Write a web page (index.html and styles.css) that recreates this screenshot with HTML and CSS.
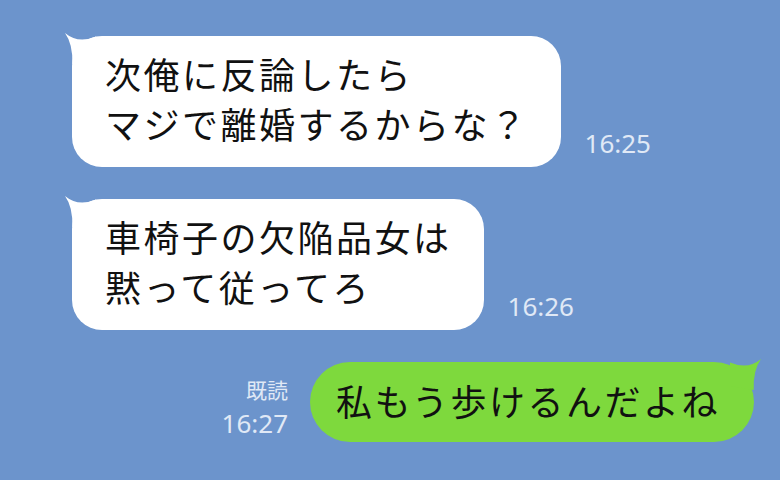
FILE: index.html
```html
<!DOCTYPE html>
<html lang="ja">
<head>
<meta charset="utf-8">
<title>chat</title>
<link rel="stylesheet" href="styles.css">
</head>
<body>
<main class="chat">
  <div class="row row-left">
    <div class="bubble bubble-in">
      <svg class="tail tail-left" viewBox="-10 -5 40 40" width="40" height="40"><path d="M-7,-3 Q6,8 24,0.5 L24,24 L0.3,28 Q1,8 -7,-3 Z"/></svg>
      <p class="msg">次俺に反論したら<br>マジで離婚するからな？</p>
    </div>
    <span class="time">16:25</span>
  </div>
  <div class="row row-left">
    <div class="bubble bubble-in">
      <svg class="tail tail-left" viewBox="-10 -5 40 40" width="40" height="40"><path d="M-7,-3 Q6,8 24,0.5 L24,24 L0.3,28 Q1,8 -7,-3 Z"/></svg>
      <p class="msg">車椅子の欠陥品女は<br>黙って従ってろ</p>
    </div>
    <span class="time">16:26</span>
  </div>
  <div class="row row-right">
    <div class="meta">
      <span class="read">既読</span>
      <span class="time time-out">16:27</span>
    </div>
    <div class="bubble bubble-out">
      <svg class="tail tail-right" viewBox="-10 -5 40 40" width="40" height="40"><path d="M-7,-3 Q6,8 24,0.5 L24,24 L0.3,28 Q1,8 -7,-3 Z"/></svg>
      <p class="msg">私もう歩けるんだよね</p>
    </div>
  </div>
</main>
</body>
</html>
```

FILE: styles.css
```css
html, body {
  margin: 0;
  padding: 0;
}
body {
  background: #6c94cc;
  width: 780px;
  height: 480px;
  overflow: hidden;
  font-family: "Noto Sans CJK JP", "Noto Sans", sans-serif;
}
.chat {
  display: flex;
  flex-direction: column;
  gap: 32px;
  padding-top: 36px;
}
.row {
  display: flex;
  align-items: flex-end;
}
.row-left {
  padding-left: 72px;
  gap: 24px;
}
.row-right {
  justify-content: flex-end;
  padding-right: 26px;
  gap: 22px;
}
.bubble {
  position: relative;
  border-radius: 30px;
  padding: 12px 32px 19px 33px;
}
.bubble-in {
  background: #ffffff;
  fill: #ffffff;
}
.bubble-out {
  background: #7ed93d;
  fill: #7ed93d;
  border-radius: 40px;
  padding: 13px 34px 17px 26px;
}
.tail {
  position: absolute;
  top: -5px;
}
.tail-left {
  left: -10px;
}
.tail-right {
  right: -10px;
  transform: scaleX(-1);
}
.msg {
  position: relative;
  margin: 0;
  font-size: 36px;
  line-height: 50px;
  letter-spacing: 2.5px;
  color: #111111;
  white-space: nowrap;
}
.time {
  font-family: "Noto Sans", sans-serif;
  font-size: 26px;
  line-height: 30px;
  color: #e0e9f6;
  margin-bottom: 9px;
}
.meta {
  display: flex;
  flex-direction: column;
  align-items: flex-end;
  margin-bottom: 1px;
}
.read {
  font-family: "Noto Sans CJK JP", sans-serif;
  font-size: 21px;
  line-height: 31px;
  color: #e0e9f6;
}
.time-out {
  line-height: 36px;
  margin-bottom: 0;
}
```
